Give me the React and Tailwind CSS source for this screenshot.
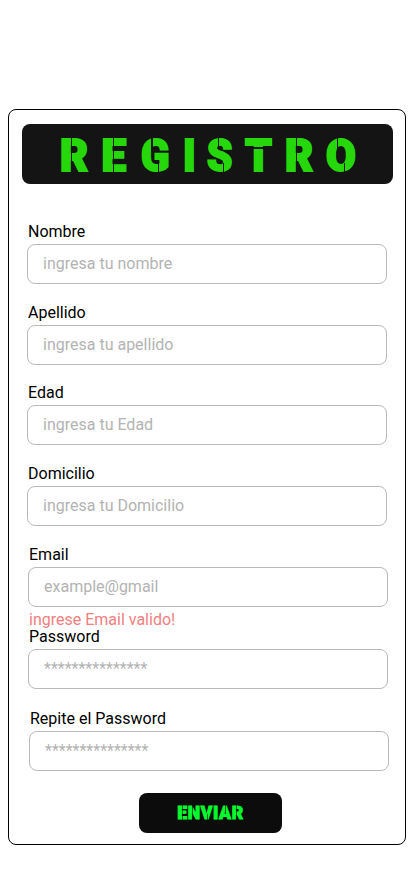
const TITLE = [
  { c: 'R', box: 'w-[42px]', glyph: 'scale-x-[0.98]', cuts: ['left-[11px] top-[-1px] w-[1.5px] h-[36px]'] },
  { c: 'E', box: 'w-[39px]', glyph: 'scale-x-[1.0]', cuts: ['left-[11px] top-[-1px] w-[1.5px] h-[36px]'] },
  { c: 'G', box: 'w-[42px]', glyph: 'scale-x-[0.95]', cuts: ['left-[10.5px] top-[-1px] w-[1.5px] h-[14px]', 'left-[17px] top-[22px] w-[1.5px] h-[13px]'] },
  { c: 'I', box: 'w-[24px]', glyph: 'scale-x-[0.95]', cuts: [] },
  { c: 'S', box: 'w-[38px]', glyph: 'scale-x-[0.92]', cuts: ['left-[11px] top-[-1px] w-[1.5px] h-[11px]', 'left-[16px] top-[24px] w-[1.5px] h-[11px]'] },
  { c: 'T', box: 'w-[40px]', glyph: 'scale-x-[0.97]', cuts: ['left-0 top-[8.5px] w-[29px] h-[1.5px]'] },
  { c: 'R', box: 'w-[41px]', glyph: 'scale-x-[0.98]', cuts: ['left-[11px] top-[-1px] w-[1.5px] h-[36px]'] },
  { c: 'O', box: 'w-[30px]', glyph: 'scale-x-[0.98]', cuts: ['left-[11px] top-[-1px] w-[1.5px] h-[11px]', 'left-[18px] top-[24px] w-[1.5px] h-[11px]'] },
];

const SEND = [
  { c: 'E', cut: 'left-[4.5px] top-0 h-[18px] w-px' },
  { c: 'N', cut: 'left-[4.7px] top-0 h-[18px] w-px' },
  { c: 'V', cut: 'left-[6px] bottom-0 h-[9px] w-px' },
  { c: 'I', cut: '' },
  { c: 'A', cut: 'left-[6px] top-0 h-[9px] w-px' },
  { c: 'R', cut: 'left-[4.5px] top-0 h-[18px] w-px' },
];

function Field({ label, hint, type = 'text', className = '', error }) {
  return (
    <div className={`w-[360px] ${className}`}>
      <label className="block h-[19px] pl-px text-[16px] leading-[19px] text-black">{label}</label>
      <input
        type={type}
        placeholder={hint}
        className="mt-[3px] block h-10 w-full rounded-lg border border-[#b9b9b9] bg-white px-[15px] pb-[2px] text-[16px] leading-[19px] text-black placeholder:text-[#b3b3b3] placeholder:opacity-100"
      />
      {error && <p className="mt-1 h-4 pl-px text-[16px] leading-[17px] text-[#ef8080]">{error}</p>}
    </div>
  );
}

export default function App() {
  return (
    <main className="min-h-[896px] w-[414px] bg-white px-2 pt-[109px] font-[Roboto,sans-serif]">
      <form className="h-[736px] w-[398px] rounded-lg border border-black px-[13px] pt-[14px]">
        <h1 className="flex h-[60px] w-[371px] rounded-lg bg-[#141414] pl-[37.5px] pt-[14.5px] text-[44px] font-black leading-[34px] text-[#25d70b] [-webkit-text-stroke:2px_#25d70b]">
          {TITLE.map((l, i) => (
            <span key={i} className={`relative block h-[34px] shrink-0 ${l.box}`}>
              <span className={`block w-fit origin-left ${l.glyph}`}>{l.c}</span>
              {l.cuts.map((cut) => (
                <span key={cut} className={`absolute bg-[#141414] ${cut}`} />
              ))}
            </span>
          ))}
        </h1>
        <div className="pl-[5px] pt-[38px]">
          <Field label="Nombre" hint="ingresa tu nombre" />
          <Field label="Apellido" hint="ingresa tu apellido" className="mt-[19px]" />
          <Field label="Edad" hint="ingresa tu Edad" className="mt-[18px]" />
          <Field label="Domicilio" hint="ingresa tu Domicilio" className="mt-[19px]" />
          <Field label="Email" hint="example@gmail" className="ml-px mt-[19px]" error="ingrese Email valido!" />
          <Field label="Password" hint="***************" type="password" className="ml-px" />
          <Field label="Repite el Password" hint="***************" type="password" className="ml-[2px] mt-5" />
        </div>
        <button
          type="button"
          className="ml-[117px] mt-[22px] flex h-10 w-[143px] items-center justify-center rounded-lg bg-[#0c0c0c] pt-[2px] text-[17.5px] font-black leading-none tracking-[0.7px] text-[#05fa2e] [-webkit-text-stroke:0.9px_#05fa2e]"
        >
          {SEND.map((l) => (
            <span key={l.c} className="relative block">
              {l.c}
              {l.cut && <span className={`absolute bg-[#0c0c0c]/60 ${l.cut}`} />}
            </span>
          ))}
        </button>
      </form>
    </main>
  );
}
